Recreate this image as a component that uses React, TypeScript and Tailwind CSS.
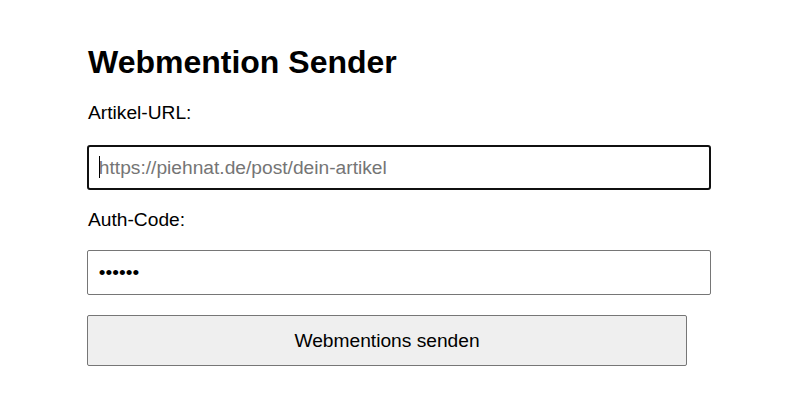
export default function App() {
  return (
    <div className="min-h-screen bg-white font-['Liberation_Sans',Arial,sans-serif] text-black">
      <div className="ml-[87px] w-[600px] pt-[44px]">
        {/* Heading */}
        <h1 className="text-[32px] font-bold leading-[37px] pl-[1px]">Webmention Sender</h1>

        <form className="flex flex-col">
          <label className="mt-[21px] text-[19.2px] leading-[22px] pl-[1px]">Artikel-URL:</label>
          <div className="relative mt-[21px]">
            <input
              type="url"
              placeholder="https://piehnat.de/post/dein-artikel"
              className="box-content block w-[600px] h-[21px] rounded-[3px] border-2 border-[#101010] bg-white px-[9.8px] py-[10px] text-[19.2px] leading-[21px] outline-none placeholder:text-[#757575]"
            />
            {/* text caret */}
            <span className="absolute left-[11.5px] top-[11px] h-[22px] w-px bg-black" />
          </div>

          <label className="mt-[19px] text-[19.2px] leading-[22px] pl-[1px]">Auth-Code:</label>
          <input
            type="password"
            defaultValue="abcdef"
            className="box-content mt-[19px] block w-[600px] h-[21px] rounded-[2px] border border-[#767676] bg-white px-[10.8px] py-[11px] text-[19.2px] leading-[21px] outline-none"
          />

          <button
            type="button"
            className="mt-[20px] h-[51px] w-[600px] rounded-[2px] border border-[#767676] bg-[#efefef] text-[19.2px] leading-[22px] text-black"
          >
            Webmentions senden
          </button>
        </form>
      </div>
    </div>
  );
}
